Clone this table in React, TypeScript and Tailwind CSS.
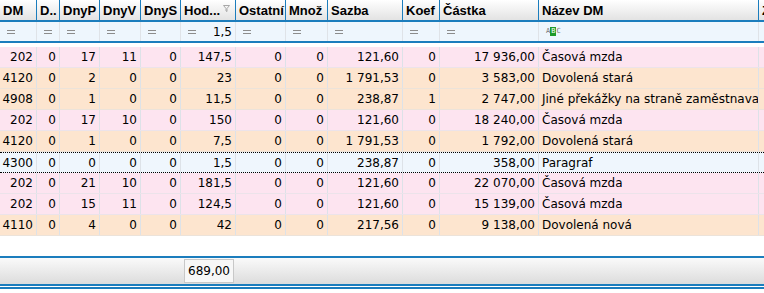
import React from "react";

const widths = [37, 23, 40, 41, 40, 55, 50, 42, 75, 37, 99, 220, 40];
const heads = ["DM", "D..", "DnyP", "DnyV", "DnyS", "Hod...", "Ostatní", "Množ", "Sazba", "Koef", "Částka", "Název DM", "Z"];

type Row = { c: string[]; kind: "pink" | "orange" | "focus" };

const rows: Row[] = [
    {c: ["202", "0", "17", "11", "0", "147,5", "0", "0", "121,60", "0", "17 936,00", "Časová mzda"], kind: "pink"},
    {c: ["4120", "0", "2", "0", "0", "23", "0", "0", "1 791,53", "0", "3 583,00", "Dovolená stará"], kind: "orange"},
    {c: ["4908", "0", "1", "0", "0", "11,5", "0", "0", "238,87", "1", "2 747,00", "Jiné překážky na straně zaměstnavatele"], kind: "orange"},
    {c: ["202", "0", "17", "10", "0", "150", "0", "0", "121,60", "0", "18 240,00", "Časová mzda"], kind: "pink"},
    {c: ["4120", "0", "1", "0", "0", "7,5", "0", "0", "1 791,53", "0", "1 792,00", "Dovolená stará"], kind: "orange"},
    {c: ["4300", "0", "0", "0", "0", "1,5", "0", "0", "238,87", "0", "358,00", "Paragraf"], kind: "focus"},
    {c: ["202", "0", "21", "10", "0", "181,5", "0", "0", "121,60", "0", "22 070,00", "Časová mzda"], kind: "pink"},
    {c: ["202", "0", "15", "11", "0", "124,5", "0", "0", "121,60", "0", "15 139,00", "Časová mzda"], kind: "pink"},
    {c: ["4110", "0", "4", "0", "0", "42", "0", "0", "217,56", "0", "9 138,00", "Dovolená nová"], kind: "orange"},
];

const rowBg = {
    pink: "bg-[#fde4f0] border-b border-[#ece3ea]",
    orange: "bg-[#fde5cf] border-b border-[#ece3da]",
    focus: "bg-[#eff6fd] border-y border-dotted border-black",
};

function Funnel() {
    return (
        <svg width="7" height="7" viewBox="0 0 7 7" className="absolute right-[5px] top-[5px]">
            <path d="M0.5 0.5h6L4 3.5v3L3 6V3.5z" fill="none" stroke="#a8a8a8" strokeWidth="1"/>
        </svg>
    );
}

function Eq() {
    return (
        <span className="flex flex-col gap-[2px]">
            <span className="block w-[8px] h-px bg-[#8c8c8c]"/>
            <span className="block w-[8px] h-px bg-[#8c8c8c]"/>
        </span>
    );
}

function AbcIcon() {
    return (
        <span className="flex items-center text-[7px] leading-none font-['DejaVu_Sans_Mono',monospace] text-[#777]">
            <span>A</span>
            <span className="bg-[#1f9a2a] text-white px-[1px] py-[1px]">B</span>
            <span>C</span>
        </span>
    );
}

export default function App() {
    return (
        <div className="w-[764px] h-[293px] overflow-hidden bg-white font-['DejaVu_Sans',sans-serif] text-[12px] text-black">
            {/* header */}
            <div className="flex h-[22px] bg-gradient-to-b from-white to-[#e3e3e3] border-b-2 border-[#1b7dbd] font-['Liberation_Sans',Arial,sans-serif] text-[13px]">
                {heads.map((h, i) => (
                    <div key={i} style={{width: widths[i]}}
                         className="relative shrink-0 border-r border-[#1b7dbd] font-bold pl-[3px] leading-[21px] whitespace-nowrap overflow-hidden">
                        {h}
                        {i === 5 && <Funnel/>}
                    </div>
                ))}
            </div>
            {/* filter row */}
            <div className="flex h-[21px] bg-[#eef6fd] border-b-2 border-[#1b7dbd]">
                {heads.map((_, i) => (
                    <div key={i} style={{width: widths[i]}}
                         className="shrink-0 border-r border-[#dfe3e8] flex items-center justify-between pl-[7px] pr-[3px]">
                        {i === 11 ? <AbcIcon/> : i < 11 ? <Eq/> : null}
                        {i === 5 && <span className="text-black">1,5</span>}
                    </div>
                ))}
            </div>
            <div className="h-[4px]"/>
            {/* data */}
            {rows.map((r, ri) => (
                <div key={ri} className={"flex h-[21px] " + rowBg[r.kind]}>
                    {widths.map((w, i) => (
                        <div key={i} style={{width: w}}
                             className={"shrink-0 border-r border-[#dde2e8] leading-[20px] whitespace-nowrap overflow-hidden " + (i === 11 ? "text-left pl-[3px]" : "text-right pr-[3px]")}>
                            {r.c[i] ?? ""}
                        </div>
                    ))}
                </div>
            ))}
            <div className="h-[20px]"/>
            {/* footer */}
            <div className="border-t-2 border-[#1b7dbd] h-[28px] bg-gradient-to-b from-[#fafafa] to-[#dcdcdc] flex items-center">
                <div className="w-[184px]"/>
                <div className="w-[50px] h-[24px] border border-[#c8c8c8] bg-[#f7f7f7] flex items-center justify-end pr-[3px]">689,00</div>
            </div>
            <div className="border-t-2 border-[#1b7dbd] h-[3px]"/>
            <div className="border-t-2 border-[#1b7dbd]"/>
        </div>
    );
}
